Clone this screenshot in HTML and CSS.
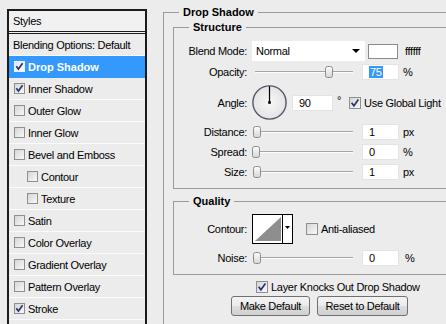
FILE: index.html
```html
<!DOCTYPE html>
<html>
<head>
<meta charset="utf-8">
<title>Layer Style</title>
<link rel="stylesheet" href="styles.css">
</head>
<body>
<div class="dialog">
  <div class="styles-panel">
    <div class="styles-head">Styles</div>
    <ul class="fx-list">
      <li class="fx-row plain">Blending Options: Default</li>
      <li class="fx-row selected"><span class="cb on"><svg viewBox="0 0 11 11"><path d="M2.3 5.2 L4.4 8 L8.6 2.2" /></svg></span><span class="fx-name">Drop Shadow</span></li>
      <li class="fx-row"><span class="cb on"><svg viewBox="0 0 11 11"><path d="M2.3 5.2 L4.4 8 L8.6 2.2" /></svg></span><span class="fx-name">Inner Shadow</span></li>
      <li class="fx-row"><span class="cb"></span><span class="fx-name">Outer Glow</span></li>
      <li class="fx-row"><span class="cb"></span><span class="fx-name">Inner Glow</span></li>
      <li class="fx-row"><span class="cb"></span><span class="fx-name">Bevel and Emboss</span></li>
      <li class="fx-row sub"><span class="cb"></span><span class="fx-name">Contour</span></li>
      <li class="fx-row sub"><span class="cb"></span><span class="fx-name">Texture</span></li>
      <li class="fx-row"><span class="cb"></span><span class="fx-name">Satin</span></li>
      <li class="fx-row"><span class="cb"></span><span class="fx-name">Color Overlay</span></li>
      <li class="fx-row"><span class="cb"></span><span class="fx-name">Gradient Overlay</span></li>
      <li class="fx-row"><span class="cb"></span><span class="fx-name">Pattern Overlay</span></li>
      <li class="fx-row"><span class="cb on"><svg viewBox="0 0 11 11"><path d="M2.3 5.2 L4.4 8 L8.6 2.2" /></svg></span><span class="fx-name">Stroke</span></li>
    </ul>
  </div>

  <fieldset class="group outer">
    <legend>Drop Shadow</legend>

    <fieldset class="group inner structure">
      <legend>Structure</legend>

      <div class="frow row-blend">
        <span class="flabel">Blend Mode:</span>
        <div class="select"><span>Normal</span><span class="arrow"></span></div>
        <span class="swatch"></span>
        <span class="hex">ffffff</span>
      </div>

      <div class="frow row-slider first">
        <span class="flabel">Opacity:</span>
        <div class="slider"><span class="thumb" style="left:73px"><svg width="8" height="12" viewBox="0 0 8 12"><defs><linearGradient id="tg1" x1="0" y1="0" x2="0" y2="1"><stop offset="0" stop-color="#fdfdfd"/><stop offset="1" stop-color="#d6d6d6"/></linearGradient></defs><path d="M0.5 2.5 Q0.5 0.5 2.5 0.5 H5.5 Q7.5 0.5 7.5 2.5 V9.5 Q7.5 11.5 5.5 11.5 H2.5 Q0.5 11.5 0.5 9.5 Z" fill="url(#tg1)" stroke="#8c8c8c"/></svg></span></div>
        <span class="num"><span class="sel">75</span></span>
        <span class="unit">%</span>
      </div>

      <div class="frow row-angle">
        <span class="flabel">Angle:</span>
        <svg class="dial" width="35" height="35" viewBox="0 0 35 35">
          <defs><radialGradient id="dg" cx="50%" cy="50%" r="50%"><stop offset="0" stop-color="#f7f7f7"/><stop offset="1" stop-color="#e4e4e4"/></radialGradient></defs>
          <circle cx="17.5" cy="17.5" r="16.6" fill="url(#dg)" stroke="#55586c" stroke-width="1.4"/>
          <line x1="17.5" y1="17.5" x2="17.5" y2="1.2" stroke="#000" stroke-width="1.2"/>
          <rect x="16.2" y="16.2" width="2.6" height="2.6" fill="#000"/>
        </svg>
        <span class="num wide">90</span>
        <span class="deg">°</span>
        <span class="cb lg on"><svg viewBox="0 0 12 12"><path d="M2.6 5.8 L4.9 8.8 L9.4 2.6" /></svg></span>
        <span class="cb-text">Use Global Light</span>
      </div>

      <div class="frow row-slider">
        <span class="flabel">Distance:</span>
        <div class="slider"><span class="thumb" style="left:1px"><svg width="8" height="12" viewBox="0 0 8 12"><path d="M0.5 2.5 Q0.5 0.5 2.5 0.5 H5.5 Q7.5 0.5 7.5 2.5 V9.5 Q7.5 11.5 5.5 11.5 H2.5 Q0.5 11.5 0.5 9.5 Z" fill="url(#tg1)" stroke="#8c8c8c"/></svg></span></div>
        <span class="num">1</span>
        <span class="unit">px</span>
      </div>

      <div class="frow row-slider">
        <span class="flabel">Spread:</span>
        <div class="slider"><span class="thumb" style="left:0px"><svg width="8" height="12" viewBox="0 0 8 12"><path d="M0.5 2.5 Q0.5 0.5 2.5 0.5 H5.5 Q7.5 0.5 7.5 2.5 V9.5 Q7.5 11.5 5.5 11.5 H2.5 Q0.5 11.5 0.5 9.5 Z" fill="url(#tg1)" stroke="#8c8c8c"/></svg></span></div>
        <span class="num">0</span>
        <span class="unit">%</span>
      </div>

      <div class="frow row-slider">
        <span class="flabel">Size:</span>
        <div class="slider"><span class="thumb" style="left:1px"><svg width="8" height="12" viewBox="0 0 8 12"><path d="M0.5 2.5 Q0.5 0.5 2.5 0.5 H5.5 Q7.5 0.5 7.5 2.5 V9.5 Q7.5 11.5 5.5 11.5 H2.5 Q0.5 11.5 0.5 9.5 Z" fill="url(#tg1)" stroke="#8c8c8c"/></svg></span></div>
        <span class="num">1</span>
        <span class="unit">px</span>
      </div>
    </fieldset>

    <fieldset class="group inner quality">
      <legend>Quality</legend>
      <div class="frow row-contour">
        <span class="flabel">Contour:</span>
        <svg class="contour" width="41" height="30" viewBox="0 0 41 30">
          <rect x="0.5" y="0.5" width="40" height="29" fill="#fff" stroke="#000"/>
          <polygon points="3,27 29,3 29,27" fill="#8e8e8e"/>
          <line x1="30.5" y1="0" x2="30.5" y2="30" stroke="#000"/>
          <polygon points="33,12 38,12 35.5,15" fill="#000"/>
        </svg>
        <span class="cb lg anti"></span>
        <span class="cb-text">Anti-aliased</span>
      </div>
      <div class="frow row-slider noise">
        <span class="flabel">Noise:</span>
        <div class="slider"><span class="thumb" style="left:1px"><svg width="8" height="12" viewBox="0 0 8 12"><path d="M0.5 2.5 Q0.5 0.5 2.5 0.5 H5.5 Q7.5 0.5 7.5 2.5 V9.5 Q7.5 11.5 5.5 11.5 H2.5 Q0.5 11.5 0.5 9.5 Z" fill="url(#tg1)" stroke="#8c8c8c"/></svg></span></div>
        <span class="num">0</span>
        <span class="unit pct">%</span>
      </div>
    </fieldset>

    <div class="knock-row">
      <span class="cb lg on"><svg viewBox="0 0 12 12"><path d="M2.6 5.8 L4.9 8.8 L9.4 2.6" /></svg></span>
      <span class="cb-text">Layer Knocks Out Drop Shadow</span>
    </div>

    <div class="btn-row">
      <button class="btn make">Make Default</button>
      <button class="btn reset">Reset to Default</button>
    </div>
  </fieldset>
</div>
</body>
</html>
```
FILE: styles.css
```css
html, body {
  margin: 0;
  padding: 0;
}

body {
  width: 446px;
  height: 324px;
  overflow: hidden;
  background: #ececec;
  color: #000;
  font-family: "Liberation Sans", Arial, sans-serif;
  font-size: 11px;
  letter-spacing: -0.3px;
}

.dialog {
  display: flex;
  align-items: flex-start;
  height: 324px;
}

/* ---------- left styles list ---------- */
.styles-panel {
  flex: none;
  box-sizing: border-box;
  margin: 9px 0 0 7px;
  width: 140px;
  height: 315px;
  border: 2px solid #1c1c1c;
  border-bottom: none;
  background: #ececec;
  overflow: hidden;
}

.styles-head {
  height: 20px;
  line-height: 20px;
  padding-left: 4px;
  background: #f1f1f1;
  border-bottom: 3px double #1c1c1c;
}

.fx-list {
  list-style: none;
  margin: 0;
  padding: 0;
}

.fx-row {
  height: 21px;
  border-bottom: 1px solid #fbfbfb;
  display: flex;
  align-items: center;
  padding-left: 5px;
}

.fx-row.plain {
  padding-left: 4px;
}

.fx-row.sub {
  padding-left: 18px;
}

.fx-row.selected {
  background: #3399ff;
  color: #fff;
  font-weight: bold;
  letter-spacing: 0;
  border-bottom-color: #3399ff;
}

.fx-name {
  margin-left: 3px;
}

/* ---------- checkboxes ---------- */
.cb {
  flex: none;
  display: inline-block;
  box-sizing: border-box;
  width: 11px;
  height: 11px;
  border: 1px solid #8e8f8f;
  background: linear-gradient(135deg, #d6d6d6, #f8f8f8);
  position: relative;
}

.cb svg {
  display: block;
  position: absolute;
  left: -1px;
  top: -1px;
  width: 11px;
  height: 11px;
}

.cb svg path {
  fill: none;
  stroke: #2b3470;
  stroke-width: 1.7;
}

.fx-row.selected .cb {
  border-color: #e8f1ff;
  background: linear-gradient(135deg, #dfe6ef, #ffffff);
}

.cb.lg {
  width: 12px;
  height: 12px;
}

.cb.lg svg {
  width: 12px;
  height: 12px;
}

.cb-text {
  margin-left: 3px;
  white-space: nowrap;
}

/* ---------- fieldsets ---------- */
.group {
  border: 1px solid #9a9a9a;
  margin: 0;
  min-width: 0;
}

.group > legend {
  font-weight: bold;
  letter-spacing: 0;
  line-height: 14px;
  padding: 0 4px;
  margin-left: 6px;
}

.outer {
  flex: none;
  box-sizing: border-box;
  margin: 5px 0 0 16px;
  padding: 0 0 0 9px;
  width: 283px;
  height: 319px;
  border-right: none;
  border-bottom: none;
}

.inner {
  border-right: none;
}

.structure {
  margin-top: 1px;
  padding: 7px 0 8px 9px;
}

.quality {
  margin-top: 5px;
  padding: 6px 0 8px 9px;
}

/* ---------- form rows ---------- */
.frow {
  display: flex;
  align-items: center;
}

.flabel {
  flex: none;
  width: 64px;
  margin-right: 5px;
  text-align: right;
  white-space: nowrap;
}

.row-blend {
  height: 20px;
}

.select {
  flex: none;
  box-sizing: border-box;
  width: 113px;
  height: 20px;
  padding: 0 5px 0 4px;
  background: #fff;
  display: flex;
  align-items: center;
  justify-content: space-between;
}

.arrow {
  width: 0;
  height: 0;
  border-left: 4px solid transparent;
  border-right: 4px solid transparent;
  border-top: 4px solid #000;
}

.swatch {
  flex: none;
  box-sizing: border-box;
  margin-left: 3px;
  width: 30px;
  height: 15px;
  background: #fff;
  border: 1px solid #8a8a8a;
}

.hex {
  margin-left: 7px;
}

.row-slider {
  height: 16px;
  margin-top: 4px;
}

.row-slider.first {
  margin-top: 3px;
}

.slider {
  flex: none;
  position: relative;
  width: 110px;
  height: 16px;
}

.slider::before {
  content: "";
  position: absolute;
  left: 3px;
  top: 7px;
  width: 98px;
  height: 1px;
  background: #a6a6a6;
  border-bottom: 1px solid #fdfdfd;
}

.thumb {
  position: absolute;
  top: 2px;
  width: 8px;
  height: 12px;
}

.thumb svg {
  display: block;
}

.num {
  flex: none;
  box-sizing: border-box;
  width: 37px;
  height: 16px;
  line-height: 14px;
  padding-left: 6px;
  background: #fff;
  border: 1px solid #e4e4e4;
}

.num.wide {
  width: 41px;
  margin-left: 5px;
}

.sel {
  background: #3399ff;
  color: #fff;
  padding: 0 1px;
}

.unit {
  margin-left: 4px;
}

.unit.pct {
  margin-left: 6px;
}

.row-angle {
  height: 35px;
  margin-top: 5px;
}

.dial {
  flex: none;
  display: block;
}

.deg {
  margin-left: 4px;
  align-self: flex-start;
  margin-top: 9px;
}

.row-angle .cb {
  margin-left: 8px;
}

.row-contour {
  height: 30px;
}

.contour {
  flex: none;
  display: block;
}

.cb.anti {
  margin-left: 13px;
}

.noise {
  margin-top: 6px;
}

.knock-row {
  display: flex;
  align-items: center;
  margin: 6px 0 0 83px;
  height: 12px;
}

.btn-row {
  display: flex;
  gap: 7px;
  margin: 3px 0 0 58px;
}

.btn {
  box-sizing: border-box;
  height: 20px;
  padding: 0;
  font-family: "Liberation Sans", Arial, sans-serif;
  font-size: 11px;
  letter-spacing: -0.3px;
  color: #000;
  border: 1px solid #707070;
  border-radius: 3px;
  background: linear-gradient(#f3f3f3, #ebebeb 50%, #dddddd 50%, #d0d0d0);
}

.btn.make {
  width: 79px;
}

.btn.reset {
  width: 91px;
}
```
